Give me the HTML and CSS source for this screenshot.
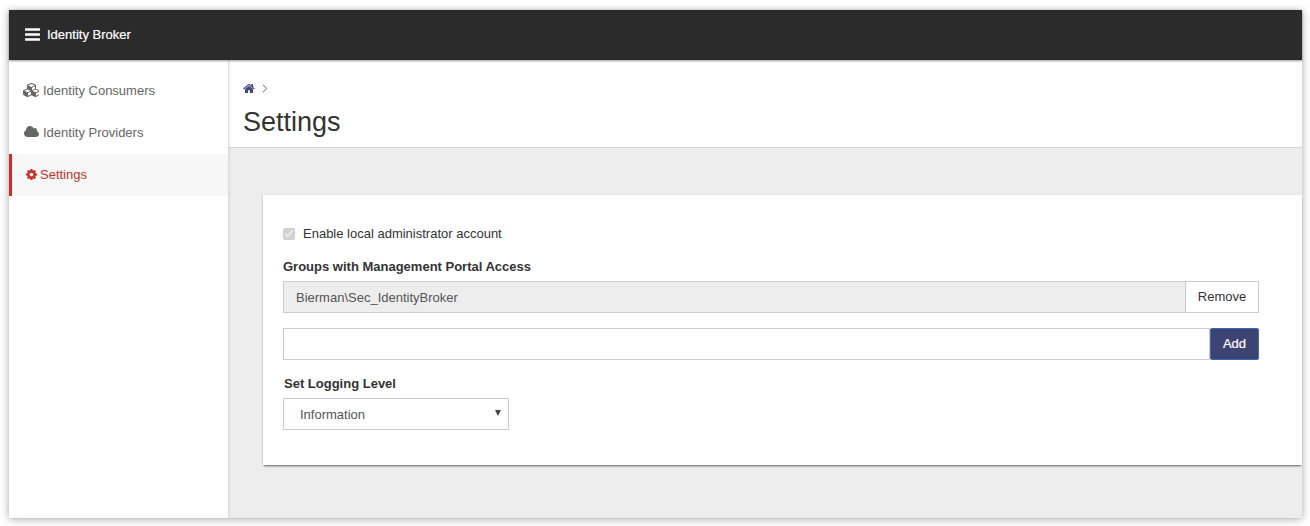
FILE: index.html
```html
<!DOCTYPE html>
<html lang="en">
<head>
<meta charset="utf-8">
<title>Identity Broker</title>
<link rel="stylesheet" href="styles.css">
</head>
<body>
<div class="window">
  <header class="topbar">
    <svg class="bars" viewBox="128 256 1536 1280"><path d="M1664 1344v128q0 26-19 45t-45 19h-1408q-26 0-45-19t-19-45v-128q0-26 19-45t45-19h1408q26 0 45 19t19 45zm0-512v128q0 26-19 45t-45 19h-1408q-26 0-45-19t-19-45v-128q0-26 19-45t45-19h1408q26 0 45 19t19 45zm0-512v128q0 26-19 45t-45 19h-1408q-26 0-45-19t-19-45v-128q0-26 19-45t45-19h1408q26 0 45 19t19 45z"/></svg>
    <span class="brand">Identity Broker</span>
  </header>
  <div class="body">
    <nav class="sidebar">
      <a class="nav-item">
        <svg class="nav-icon cubes" viewBox="0 0 2048 1792"><path d="M640 1632l384-192v-314l-384 164v342zm-64-454l404-173-404-173-404 173zm1088 454l384-192v-314l-384 164v342zm-64-454l404-173-404-173-404 173zm-448-293l384-165v-266l-384 164v267zm-64-379l441-189-441-189-441 189zm1088 518v416q0 36-19 67t-52 47l-448 224q-25 14-57 14t-57-14l-448-224q-4-2-6-4-2 2-6 4l-448 224q-25 14-57 14t-57-14l-448-224q-33-16-52-47t-19-67v-416q0-38 21.5-70t56.5-48l434-186v-400q0-38 21.5-70t56.5-48l448-192q23-10 50-10t50 10l448 192q35 16 56.5 48t21.5 70v400l434 186q36 16 57 48t21 70z"/></svg>
        Identity Consumers
      </a>
      <a class="nav-item">
        <svg class="nav-icon cloud" viewBox="0 0 1920 1792"><path d="M1856 1152q0 159-112.5 271.5t-271.5 112.5h-1088q-185 0-316.5-131.5t-131.5-316.5q0-132 71-241.5t187-163.5q-2-28-2-43 0-212 150-362t362-150q158 0 286.5 88t187.5 230q70-62 166-62 106 0 181 75t75 181q0 75-41 138 129 30 213 134.5t84 239.5z"/></svg>
        Identity Providers
      </a>
      <a class="nav-item active">
        <svg class="nav-icon cog" viewBox="128 128 1536 1536"><path d="M1152 896q0-106-75-181t-181-75-181 75-75 181 75 181 181 75 181-75 75-181zm512-109v222q0 12-8 23t-20 13l-185 28q-19 54-39 91 35 50 107 138 10 12 10 25t-9 23q-27 37-99 108t-94 71q-12 0-26-9l-138-108q-44 23-91 38-16 136-29 186-7 28-36 28h-222q-14 0-24.5-8.5t-11.5-21.5l-28-184q-49-16-90-37l-141 107q-10 9-25 9-14 0-25-11-126-114-165-168-7-10-7-23 0-12 8-23 15-21 51-66.5t54-70.5q-27-50-41-99l-183-27q-13-2-21-12.5t-8-23.5v-222q0-12 8-23t19-13l186-28q14-46 39-92-40-57-107-138-10-12-10-24 0-10 9-23 26-36 98.5-107.5t94.5-71.5q13 0 26 10l138 107q44-23 91-38 16-136 29-186 7-28 36-28h222q14 0 24.5 8.5t11.5 21.5l28 184q49 16 90 37l142-107q9-9 24-9 13 0 25 10 129 119 165 170 7 8 7 22 0 12-8 23-15 21-51 66.5t-54 70.5q26 50 41 98l183 28q13 2 21 12.5t8 23.5z"/></svg>
        Settings
      </a>
    </nav>
    <main class="content">
      <div class="page-head">
        <div class="crumbs">
          <svg class="home" viewBox="0 128 1664 1408"><path d="M1408 992v480q0 26-19 45t-45 19h-384v-384h-256v384h-384q-26 0-45-19t-19-45v-480q0-1 .5-3t.5-3l575-474 575 474q1 2 1 6zm223-69l-62 74q-8 9-21 11h-3q-13 0-21-7l-692-577-692 577q-12 8-24 7-13-2-21-11l-62-74q-8-10-7-23.5t11-21.5l719-599q32-26 76-26t76 26l244 204v-195q0-14 9-23t23-9h192q14 0 23 9t9 23v408l219 182q10 8 11 21.5t-7 23.5z"/></svg>
          <svg class="chev" viewBox="0 0 6 9"><path d="M1 .8 4.8 4.5 1 8.2"/></svg>
        </div>
        <h1 class="title">Settings</h1>
      </div>
      <section class="card">
        <label class="check-row">
          <input class="check" type="checkbox" checked disabled>
          <span>Enable local administrator account</span>
        </label>
        <div class="label groups-label">Groups with Management Portal Access</div>
        <div class="group">
          <input class="field readonly" type="text" value="Bierman\Sec_IdentityBroker" readonly>
          <button class="btn btn-remove" type="button">Remove</button>
        </div>
        <div class="group group-add">
          <input class="field" type="text">
          <button class="btn btn-add" type="button">Add</button>
        </div>
        <div class="label level-label">Set Logging Level</div>
        <div class="select-wrap">
          <select class="select">
            <option>Information</option>
          </select>
        </div>
      </section>
    </main>
  </div>
</div>
</body>
</html>
```
FILE: styles.css
```css
* { box-sizing: border-box; }
html, body { height: 100%; }
body {
  margin: 0;
  padding: 10px 8px 8px 9px;
  background: #fff;
  font-family: "Liberation Sans", Arial, sans-serif;
  font-size: 13px;
  color: #333;
  overflow: hidden;
}
.window {
  height: 100%;
  display: flex;
  flex-direction: column;
  background: #ededed;
  box-shadow: 0 1px 8px rgba(0, 0, 0, .35);
}
.topbar {
  flex: 0 0 50px;
  display: flex;
  align-items: center;
  padding: 0 0 2px 16px;
  background: #2b2b2b;
  box-shadow: 0 1px 2px rgba(0, 0, 0, .4);
  position: relative;
  z-index: 2;
}
.bars { width: 15px; height: 13px; fill: #fff; margin-right: 7px; }
.brand { color: #fff; font-size: 13px; font-weight: 400; -webkit-text-stroke: .2px #fff; }
.body { flex: 1; display: flex; min-height: 0; }
.sidebar {
  flex: 0 0 220px;
  padding-top: 10px;
  background: #fff;
  border-right: 1px solid #dcdcdc;
  box-shadow: 1px 0 2px rgba(0, 0, 0, .06);
  position: relative;
  z-index: 1;
}
.nav-item {
  height: 42px;
  display: flex;
  align-items: center;
  padding: 0 0 2px 14px;
  color: #666;
  font-size: 13px;
}
.nav-item.active {
  background: #f7f7f7;
  border-left: 3px solid #d12d26;
  color: #c9302c;
}
.nav-icon { fill: #666; margin-right: 4px; }
.cubes { width: 16px; height: 14px; }
.cloud { width: 16px; height: 14px; margin-left: 1px; margin-right: 3px; }
.cog { width: 11px; height: 11px; fill: #c9302c; margin-right: 3px; }
.content { flex: 1; min-width: 0; }
.page-head {
  height: 88px;
  padding: 21px 14px 0;
  background: #fff;
  border-bottom: 1px solid #d6d6d6;
}
.crumbs { display: flex; align-items: center; gap: 7px; height: 14px; }
.home { width: 12px; height: 10px; fill: #454a7c; }
.chev { width: 6px; height: 9px; fill: none; stroke: #666; stroke-width: 1; }
.title {
  margin: 12px 0 0;
  font-size: 27px;
  font-weight: 400;
  line-height: 30px;
  color: #333;
}
.card {
  margin: 47px 0 0 34px;
  height: 270px;
  padding: 28px 43px 0 20px;
  background: #fff;
  box-shadow: 0 2px 2px -1px rgba(0, 0, 0, .6), -1px 0 2px rgba(0, 0, 0, .08);
}
.check-row { display: flex; align-items: center; gap: 8px; height: 20px; font-size: 13px; color: #333; }
.check { width: 12px; height: 12px; margin: 2px 0 0; }
.label { font-size: 13px; font-weight: 700; color: #333; line-height: 16px; }
.groups-label { margin-top: 16px; }
.level-label { margin: 16px 0 0 1px; }
.group { display: flex; height: 32px; margin-top: 6px; }
.group-add { margin-top: 15px; }
.field {
  flex: 1;
  min-width: 0;
  height: 32px;
  padding: 0 12px;
  border: 1px solid #ccc;
  background: #fff;
  font: 13px "Liberation Sans", Arial, sans-serif;
  color: #555;
  outline: 0;
}
.readonly { background: #ededed; }
.btn {
  height: 32px;
  padding: 0 0 2px;
  font: 13px "Liberation Sans", Arial, sans-serif;
  border: 1px solid #ccc;
  border-left: 0;
  background: #fff;
  color: #333;
}
.btn-remove { flex: 0 0 73px; }
.btn-add {
  flex: 0 0 49px;
  border: 1px solid #3d6ab0;
  border-radius: 2px;
  background: #3d4373;
  color: #fff;
  -webkit-text-stroke: .2px #fff;
}
.select-wrap { position: relative; width: 226px; margin-top: 6px; }
.select-wrap::after {
  content: "";
  position: absolute;
  right: 8px;
  top: 12px;
  border: 3px solid transparent;
  border-top: 6px solid #444;
  border-bottom: 0;
}
.select {
  display: block;
  width: 100%;
  height: 32px;
  padding: 0 16px;
  appearance: none;
  border: 1px solid #ccc;
  border-radius: 0;
  background: #fff;
  font: 13px "Liberation Sans", Arial, sans-serif;
  color: #555;
}
```
